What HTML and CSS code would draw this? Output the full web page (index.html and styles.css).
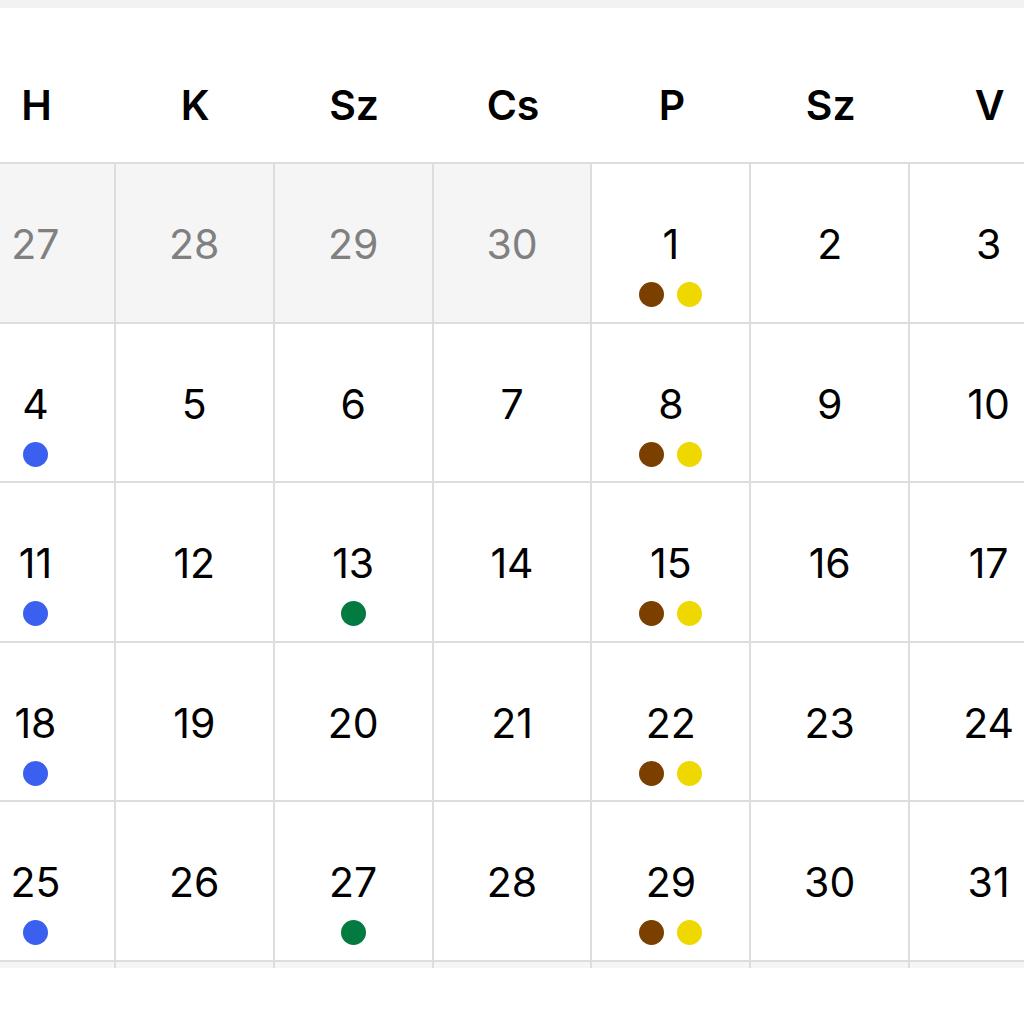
FILE: index.html
```html
<!DOCTYPE html>
<html lang="hu">
<head>
<meta charset="utf-8">
<title>Naptár</title>
<link rel="stylesheet" href="styles.css">
</head>
<body>
<div class="topbar"></div>
<div class="calendar">
  <div class="weekdays">
    <div class="wd">H</div><div class="wd">K</div><div class="wd">Sz</div><div class="wd">Cs</div><div class="wd">P</div><div class="wd">Sz</div><div class="wd">V</div>
  </div>
  <div class="grid-wrap">
    <div class="grid">
      <div class="cell other"><span class="num">27</span><div class="dots"></div></div>
      <div class="cell other"><span class="num">28</span><div class="dots"></div></div>
      <div class="cell other"><span class="num">29</span><div class="dots"></div></div>
      <div class="cell other"><span class="num">30</span><div class="dots"></div></div>
      <div class="cell"><span class="num">1</span><div class="dots"><span class="dot brown"></span><span class="dot yellow"></span></div></div>
      <div class="cell"><span class="num">2</span><div class="dots"></div></div>
      <div class="cell"><span class="num">3</span><div class="dots"></div></div>

      <div class="cell"><span class="num">4</span><div class="dots"><span class="dot blue"></span></div></div>
      <div class="cell"><span class="num">5</span><div class="dots"></div></div>
      <div class="cell"><span class="num">6</span><div class="dots"></div></div>
      <div class="cell"><span class="num">7</span><div class="dots"></div></div>
      <div class="cell"><span class="num">8</span><div class="dots"><span class="dot brown"></span><span class="dot yellow"></span></div></div>
      <div class="cell"><span class="num">9</span><div class="dots"></div></div>
      <div class="cell"><span class="num">10</span><div class="dots"></div></div>

      <div class="cell"><span class="num">11</span><div class="dots"><span class="dot blue"></span></div></div>
      <div class="cell"><span class="num">12</span><div class="dots"></div></div>
      <div class="cell"><span class="num">13</span><div class="dots"><span class="dot green"></span></div></div>
      <div class="cell"><span class="num">14</span><div class="dots"></div></div>
      <div class="cell"><span class="num">15</span><div class="dots"><span class="dot brown"></span><span class="dot yellow"></span></div></div>
      <div class="cell"><span class="num">16</span><div class="dots"></div></div>
      <div class="cell"><span class="num">17</span><div class="dots"></div></div>

      <div class="cell"><span class="num">18</span><div class="dots"><span class="dot blue"></span></div></div>
      <div class="cell"><span class="num">19</span><div class="dots"></div></div>
      <div class="cell"><span class="num">20</span><div class="dots"></div></div>
      <div class="cell"><span class="num">21</span><div class="dots"></div></div>
      <div class="cell"><span class="num">22</span><div class="dots"><span class="dot brown"></span><span class="dot yellow"></span></div></div>
      <div class="cell"><span class="num">23</span><div class="dots"></div></div>
      <div class="cell"><span class="num">24</span><div class="dots"></div></div>

      <div class="cell"><span class="num">25</span><div class="dots"><span class="dot blue"></span></div></div>
      <div class="cell"><span class="num">26</span><div class="dots"></div></div>
      <div class="cell"><span class="num">27</span><div class="dots"><span class="dot green"></span></div></div>
      <div class="cell"><span class="num">28</span><div class="dots"></div></div>
      <div class="cell"><span class="num">29</span><div class="dots"><span class="dot brown"></span><span class="dot yellow"></span></div></div>
      <div class="cell"><span class="num">30</span><div class="dots"></div></div>
      <div class="cell"><span class="num">31</span><div class="dots"></div></div>

      <div class="cell other"></div>
      <div class="cell other"></div>
      <div class="cell other"></div>
      <div class="cell other"></div>
      <div class="cell other"></div>
      <div class="cell other"></div>
      <div class="cell other"></div>
    </div>
  </div>
</div>
</body>
</html>
```
FILE: styles.css
```css
* { box-sizing: border-box; }
html, body {
  margin: 0;
  padding: 0;
  background: #ffffff;
  overflow: hidden;
}
body {
  font-family: Inter, "Noto Sans", "Liberation Sans", sans-serif;
  color: #000;
  width: 1024px;
  height: 1024px;
}
.topbar {
  height: 8px;
  background: #f2f2f2;
}
.calendar {
  width: 1112px;
  margin-left: -43px;
}
.weekdays {
  display: grid;
  grid-template-columns: repeat(7, 1fr);
  height: 156px;
  padding-top: 72px;
  border-bottom: 2px solid #dddddd;
}
.wd {
  text-align: center;
  font-size: 41px;
  font-weight: 600;
  line-height: 50px;
}
.grid-wrap {
  height: 804px;
  overflow: hidden;
}
.grid {
  display: grid;
  grid-template-columns: repeat(7, 1fr);
  grid-auto-rows: 159.6px;
}
.cell {
  border-right: 2px solid #dddddd;
  border-bottom: 2px solid #dddddd;
  padding-top: 55px;
  display: flex;
  flex-direction: column;
  align-items: center;
}
.cell.other {
  background: #f5f5f5;
  color: #808080;
}
.num {
  font-size: 41px;
  line-height: 50px;
  font-weight: 400;
}
.dots {
  margin-top: 13px;
  height: 25px;
  display: flex;
  gap: 13px;
  justify-content: center;
}
.dot {
  width: 25px;
  height: 25px;
  border-radius: 50%;
}
.dot.brown { background: #7b3f00; }
.dot.yellow { background: #efd800; }
.dot.blue { background: #3b60ef; }
.dot.green { background: #037a40; }
```
